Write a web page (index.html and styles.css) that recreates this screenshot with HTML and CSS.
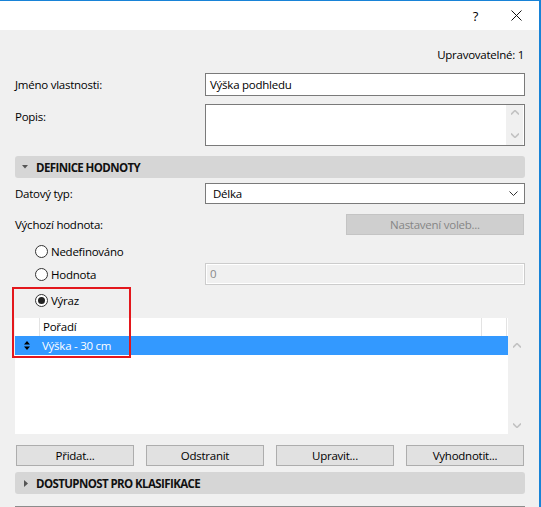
FILE: index.html
```html
<!DOCTYPE html>
<html lang="cs">
<head>
    <meta charset="UTF-8">
    <title>Vlastnost</title>
    <link rel="stylesheet" href="styles.css">
</head>
<body>
<div class="window">

    <!-- Titulek okna -->
    <div class="titlebar">
        <span class="help">?</span>
        <span class="close">
            <svg width="11" height="11" viewBox="0 0 11 11"><path d="M0.5 0.5 L10.5 10.5 M10.5 0.5 L0.5 10.5" stroke="#111" stroke-width="1" fill="none"/></svg>
        </span>
    </div>

    <div class="content">
        <div class="editable">Upravovatelné: 1</div>

        <div class="field name-row">
            <span class="label">Jméno vlastnosti:</span>
            <div class="input">Výška podhledu</div>
        </div>

        <div class="field desc-row">
            <span class="label">Popis:</span>
            <div class="textarea">
                <div class="vscroll">
                    <svg width="8" height="5" viewBox="0 0 8 5"><path d="M0 4.5 L4 0.5 L8 4.5" stroke="#c2c2c2" stroke-width="1.6" fill="none"/></svg>
                    <svg width="8" height="5" viewBox="0 0 8 5"><path d="M0 0.5 L4 4.5 L8 0.5" stroke="#c2c2c2" stroke-width="1.6" fill="none"/></svg>
                </div>
            </div>
        </div>

        <!-- Definice hodnoty -->
        <div class="section">
            <svg class="tri" width="6" height="4" viewBox="0 0 6 4"><path d="M0 0 L6 0 L3 3.5 Z" fill="#555"/></svg>
            DEFINICE HODNOTY
        </div>

        <div class="field type-row">
            <span class="label">Datový typ:</span>
            <div class="select">
                Délka
                <svg width="9" height="5" viewBox="0 0 9 5"><path d="M0.5 0.5 L4.5 4.5 L8.5 0.5" stroke="#333" stroke-width="1" fill="none"/></svg>
            </div>
        </div>

        <div class="field default-row">
            <span class="label">Výchozí hodnota:</span>
            <div class="btn-wrap"><button class="btn disabled">Nastavení voleb...</button></div>
        </div>

        <div class="radio-row first">
            <span class="radio"></span>Nedefinováno
        </div>

        <div class="field value-row">
            <div class="radio-row"><span class="radio"></span>Hodnota</div>
            <div class="input off">0</div>
        </div>

        <div class="radio-row expr">
            <span class="radio checked"></span>Výraz
        </div>

        <!-- Seznam výrazů -->
        <div class="list">
            <div class="table">
                <div class="thead">
                    <span class="col-handle"></span>
                    <span class="col-name">Pořadí</span>
                    <span class="col-extra"></span>
                    <span class="col-last"></span>
                </div>
                <div class="row selected">
                    <span class="col-handle">
                        <svg width="6" height="9" viewBox="0 0 6 9"><path d="M0 3.5 L3 0 L6 3.5 Z M0 5.5 L6 5.5 L3 9 Z" fill="#000"/></svg>
                    </span>
                    <span class="col-name">Výška - 30 cm</span>
                </div>
            </div>
            <div class="vscroll list-scroll">
                <svg width="8" height="5" viewBox="0 0 8 5"><path d="M0 4.5 L4 0.5 L8 4.5" stroke="#c2c2c2" stroke-width="1.6" fill="none"/></svg>
                <svg width="8" height="5" viewBox="0 0 8 5"><path d="M0 0.5 L4 4.5 L8 0.5" stroke="#c2c2c2" stroke-width="1.6" fill="none"/></svg>
            </div>
        </div>

        <div class="buttons">
            <button class="btn">Přidat...</button>
            <button class="btn">Odstranit</button>
            <button class="btn">Upravit...</button>
            <button class="btn">Vyhodnotit...</button>
        </div>

        <!-- Dostupnost -->
        <div class="section closed">
            <svg class="tri" width="4" height="7" viewBox="0 0 4 7"><path d="M0 0 L4 3.5 L0 7 Z" fill="#555"/></svg>
            DOSTUPNOST PRO KLASIFIKACE
        </div>

        <div class="next-section"></div>
    </div>

    <div class="highlight"></div>
</div>
</body>
</html>
```

FILE: styles.css
```css
/* Dialog vlastnosti */
body {
    margin: 0;
    font-family: "Open Sans", "Noto Sans", sans-serif;
    font-size: 11.5px;
    letter-spacing: -0.25px;
    color: #000;
    background: #f0f0f0;
}

.window {
    position: relative;
    width: 539px;
    height: 506px;
    border-top: 1px solid #1883d7;
    border-right: 2px solid #1883d7;
    background: #f0f0f0;
    overflow: hidden;
}

/* Titulek */
.titlebar {
    height: 29px;
    background: #fff;
    display: flex;
    justify-content: flex-end;
    align-items: center;
}

.help {
    font-size: 13px;
    margin-right: 33px;
}

.close {
    display: flex;
    margin-right: 17px;
}

.content {
    padding: 0 14px 0 15px;
}

.editable {
    margin-top: 17px;
    line-height: 16px;
    text-align: right;
    padding-right: 1px;
}

/* Řádky formuláře */
.field {
    display: grid;
    grid-template-columns: 190px 1fr;
    align-items: center;
}

.label {
    line-height: 16px;
}

.input {
    height: 21px;
    line-height: 21px;
    border: 1px solid #7a7a7a;
    background: #fff;
    padding: 0 4px;
}

.input.off {
    border-color: #cccccc;
    box-shadow: inset 0 0 0 1px #fff;
    background: #f0f0f0;
    color: #8a8a8a;
}

.name-row {
    margin-top: 10px;
}

.desc-row {
    margin-top: 8px;
    align-items: start;
}

.desc-row .label {
    padding-top: 5px;
}

.textarea {
    height: 40px;
    border: 1px solid #7a7a7a;
    background: #fff;
    display: flex;
    justify-content: flex-end;
    padding-right: 1px;
}

.vscroll {
    width: 17px;
    background: #f0f0f0;
    display: flex;
    flex-direction: column;
    align-items: center;
    justify-content: space-between;
    padding: 5px 0 7px;
    box-sizing: border-box;
}

/* Sekce */
.section {
    margin-top: 10px;
    height: 22px;
    background: #d6d6d6;
    border-radius: 3px;
    display: flex;
    align-items: center;
    padding-left: 7px;
    font-weight: bold;
    letter-spacing: -0.6px;
    color: #111;
}

.section .tri {
    margin-right: 8px;
}

.section.closed {
    margin-top: 6px;
    padding-left: 9px;
}

.type-row {
    margin-top: 5px;
}

.select {
    height: 19px;
    border: 1px solid #7a7a7a;
    background: #fff;
    padding: 0 6px 0 7px;
    display: flex;
    align-items: center;
    justify-content: space-between;
}

.default-row {
    margin-top: 10px;
}

.btn-wrap {
    display: flex;
    justify-content: flex-end;
    padding-right: 1px;
}

.btn {
    height: 21px;
    border: 1px solid #adadad;
    background: #e1e1e1;
    font-family: inherit;
    font-size: 11.5px;
    letter-spacing: -0.25px;
    color: #000;
    padding: 0;
}

.btn.disabled {
    width: 178px;
    background: #cfcfcf;
    border-color: #c4c4c4;
    color: #868686;
}

/* Přepínače */
.radio-row {
    display: flex;
    align-items: center;
    height: 16px;
    padding-left: 20px;
}

.radio-row.first {
    margin-top: 8px;
}

.value-row {
    margin-top: 4px;
}

.value-row .input {
    height: 20px;
    line-height: 20px;
}

.radio-row.expr {
    margin-top: 7px;
}

.radio {
    width: 11px;
    height: 11px;
    border: 1px solid #333;
    border-radius: 50%;
    background: #fff;
    margin-right: 3px;
    position: relative;
}

.radio.checked::after {
    content: "";
    position: absolute;
    left: 2px;
    top: 2px;
    width: 7px;
    height: 7px;
    border-radius: 50%;
    background: #222;
}

/* Seznam */
.list {
    margin-top: 10px;
    height: 116px;
    display: flex;
}

.table {
    flex: 1;
    background: #fff;
}

.thead,
.row {
    display: flex;
    align-items: center;
}

.thead {
    height: 18px;
}

.row {
    height: 19px;
}

.col-handle {
    width: 24px;
    height: 100%;
    display: flex;
    align-items: center;
    justify-content: center;
}

.thead .col-handle {
    border-right: 1px solid #e3e3e3;
}

.thead span {
    height: 100%;
    line-height: 18px;
}

.col-name {
    padding-left: 3px;
}

.thead .col-name {
    flex: 1;
}

.col-extra {
    width: 24px;
    border-left: 1px solid #e3e3e3;
}

.col-last {
    width: 1px;
    border-left: 1px solid #e3e3e3;
}

.row.selected {
    background: #3399ff;
    color: #fff;
}

.list-scroll {
    margin-top: 18px;
    padding: 7px 0 6px;
}

/* Tlačítka */
.buttons {
    margin-top: 11px;
    display: grid;
    grid-template-columns: repeat(4, 118px);
    gap: 12px;
    padding-left: 1px;
}

.next-section {
    margin-top: 12px;
    border-top: 1px solid #8c8c8c;
}

/* Zvýraznění */
.highlight {
    position: absolute;
    left: 12px;
    top: 286px;
    width: 115px;
    height: 67px;
    border: 2px solid #e3171c;
}
```
